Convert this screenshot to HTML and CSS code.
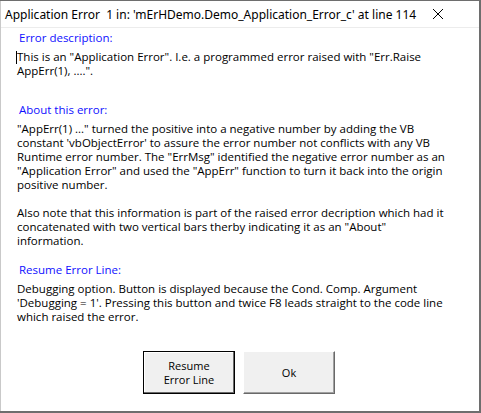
FILE: index.html
```html
<!DOCTYPE html>
<html>
<head>
<meta charset="utf-8">
<link rel="stylesheet" href="styles.css">
</head>
<body>
<div class="window">
  <div class="titlebar">
    <span class="title">Application Error&nbsp; 1 in: 'mErHDemo.Demo_Application_Error_c' at line 114</span>
    <svg class="close" width="12" height="12" viewBox="0 0 12 12"><path d="M1 1 L11 11 M11 1 L1 11" stroke="#000" stroke-width="1" fill="none"/></svg>
  </div>
  <div class="content">
    <section class="sec sec1">
      <div class="label">Error description:</div>
      <p class="para"><span class="caret"></span>This is an "Application Error". I.e. a programmed error raised with "Err.Raise<br>AppErr(1), ....".</p>
    </section>
    <section class="sec sec2">
      <div class="label">About this error:</div>
      <p class="para">"AppErr(1) ..." turned the positive into a negative number by adding the VB<br>constant 'vbObjectError' to assure the error number not conflicts with any VB<br>Runtime error number. The "ErrMsg" identified the negative error number as an<br>"Application Error" and used the "AppErr" function to turn it back into the origin<br>positive number.<br><br>Also note that this information is part of the raised error decription which had it<br>concatenated with two vertical bars therby indicating it as an "About"<br>information.</p>
    </section>
    <section class="sec sec3">
      <div class="label">Resume Error Line:</div>
      <p class="para">Debugging option. Button is displayed because the Cond. Comp. Argument<br>'Debugging = 1'. Pressing this button and twice F8 leads straight to the code line<br>which raised the error.</p>
    </section>
    <div class="buttons">
      <button class="btn btn-default">Resume<br>Error Line</button>
      <button class="btn">Ok</button>
    </div>
  </div>
</div>
</body>
</html>
```
FILE: styles.css
```css
html, body {
  margin: 0;
  padding: 0;
}
body {
  width: 481px;
  height: 413px;
  background: #6e6e6e;
  overflow: hidden;
}
.window {
  box-sizing: border-box;
  margin-top: 1px;
  width: 479px;
  height: 410px;
  background: #fff;
  border-left: 1px solid #c9c9c9;
  display: flex;
  flex-direction: column;
}
.titlebar {
  height: 26px;
  border-bottom: 1px solid #ececec;
  display: flex;
  align-items: center;
  padding-left: 4px;
  font-family: "Noto Sans", sans-serif;
  font-size: 12px;
  color: #000;
}
.title {
  white-space: nowrap;
}
.close {
  margin-left: auto;
  margin-right: 35px;
}
.content {
  padding-left: 15px;
  font-family: "Open Sans", sans-serif;
  font-size: 11.5px;
  line-height: 14px;
  color: #000;
}
.sec {
  display: flex;
  flex-direction: column;
  gap: 5px;
}
.sec1 { margin-top: 3px; }
.sec2 { margin-top: 25px; }
.sec3 { margin-top: 15px; }
.label {
  color: #1010ff;
  padding-left: 3px;
  white-space: nowrap;
}
.para {
  margin: 0;
  padding-left: 1px;
  white-space: nowrap;
  position: relative;
}
.caret {
  position: absolute;
  left: 0;
  top: 1px;
  width: 1px;
  height: 13px;
  background: #000;
}
.buttons {
  display: flex;
  gap: 8px;
  margin-top: 27px;
  padding-left: 127px;
}
.btn {
  box-sizing: border-box;
  width: 92px;
  height: 43px;
  padding: 0;
  background: #f0f0f0;
  font-family: "Open Sans", sans-serif;
  font-size: 11px;
  line-height: 14px;
  color: #000;
  border: 1px solid;
  border-color: #ffffff #696969 #696969 #ffffff;
  box-shadow: inset -1px -1px 0 #a0a0a0;
}
.btn-default {
  border: 1px solid #000;
  box-shadow: inset -1px -1px 0 #696969, inset 1px 1px 0 #fff;
}
```
